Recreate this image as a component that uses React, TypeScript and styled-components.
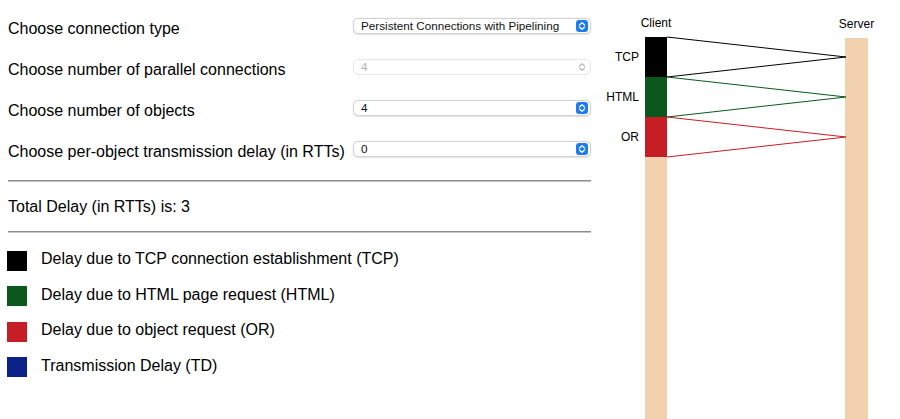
import React from 'react';
import styled, { createGlobalStyle } from 'styled-components';

const GlobalStyle = createGlobalStyle`
  html, body { margin: 0; padding: 0; background: #ffffff; }
  body { font-family: "Liberation Sans", Arial, sans-serif; color: #000; }
  * { box-sizing: border-box; }
`;

const Page = styled.div`
  display: flex;
  width: 900px;
  height: 419px;
  overflow: hidden;
`;

const Controls = styled.div`
  width: 592px;
  flex: none;
  padding: 5px 0 0 8px;
  display: flex;
  flex-direction: column;
`;

const Form = styled.div`
  display: grid;
  grid-template-columns: 345px 238px;
  grid-auto-rows: 41px;
  align-items: center;
`;

const Label = styled.div`
  font-size: 16px;
  line-height: 18px;
  padding-top: 7px;
  white-space: nowrap;
`;

const SelectBox = styled.div<{ $disabled?: boolean }>`
  width: 238px;
  height: 16px;
  border: 1px solid ${(p) => (p.$disabled ? '#e6e6e6' : '#d2d2d2')};
  border-radius: 5px;
  background: #fff;
  box-shadow: ${(p) => (p.$disabled ? 'none' : '0 0.5px 1.5px rgba(0,0,0,0.12)')};
  display: flex;
  align-items: center;
  justify-content: space-between;
  padding: 0 2px 0 7px;
  font-size: 11.7px;
  line-height: 12px;
  color: ${(p) => (p.$disabled ? '#b4b4b4' : '#111')};
`;

const Chevron = styled.span<{ $disabled?: boolean }>`
  width: 12px;
  height: 12px;
  border-radius: 3px;
  background: ${(p) => (p.$disabled ? 'transparent' : '#1f7bf0')};
  display: flex;
  align-items: center;
  justify-content: center;
`;

const Divider = styled.div<{ $top: number }>`
  width: 583px;
  height: 2px;
  margin-top: ${(p) => p.$top}px;
  border-top: 1px solid #8e8e8e;
  border-bottom: 1px solid #c4c4c4;
`;

const Total = styled.div`
  margin-top: 16px;
  font-size: 16px;
  line-height: 18px;
`;

const Legend = styled.div`
  margin-top: 17.7px;
  display: flex;
  flex-direction: column;
  gap: 15.6px;
`;

const LegendRow = styled.div`
  display: flex;
  align-items: flex-start;
  height: 20px;
`;

const Swatch = styled.span<{ $color: string }>`
  width: 20px;
  height: 20px;
  margin-left: -1px;
  background: ${(p) => p.$color};
  flex: none;
`;

const LegendText = styled.span`
  margin-left: 14px;
  margin-top: -0.5px;
  font-size: 16px;
  line-height: 18px;
  white-space: nowrap;
`;

const Diagram = styled.svg`
  width: 308px;
  height: 419px;
  flex: none;
  display: block;
`;

const COLORS = {
  tcp: '#000000',
  html: '#0b581d',
  or: '#c61e24',
  td: '#0a2187',
  peach: '#f1d1ae',
};

function Select({ value, disabled }: { value: string; disabled?: boolean }) {
  const stroke = disabled ? '#b8b8b8' : '#ffffff';
  return (
    <SelectBox $disabled={disabled}>
      <span>{value}</span>
      <Chevron $disabled={disabled}>
        <svg width="8" height="10" viewBox="0 0 8 10">
          <path d="M1.5 4 L4 1.6 L6.5 4" fill="none" stroke={stroke} strokeWidth="1.3" strokeLinecap="round" strokeLinejoin="round" />
          <path d="M1.5 6 L4 8.4 L6.5 6" fill="none" stroke={stroke} strokeWidth="1.3" strokeLinecap="round" strokeLinejoin="round" />
        </svg>
      </Chevron>
    </SelectBox>
  );
}

const rows = [
  { label: 'Choose connection type', value: 'Persistent Connections with Pipelining' },
  { label: 'Choose number of parallel connections', value: '4', disabled: true },
  { label: 'Choose number of objects', value: '4' },
  { label: 'Choose per-object transmission delay (in RTTs)', value: '0' },
];

const legend = [
  { color: COLORS.tcp, text: 'Delay due to TCP connection establishment (TCP)' },
  { color: COLORS.html, text: 'Delay due to HTML page request (HTML)' },
  { color: COLORS.or, text: 'Delay due to object request (OR)' },
  { color: COLORS.td, text: 'Transmission Delay (TD)' },
];

const segments = [
  { label: 'TCP', color: COLORS.tcp, y: 37 },
  { label: 'HTML', color: COLORS.html, y: 77 },
  { label: 'OR', color: COLORS.or, y: 117 },
];

export default function App() {
  return (
    <>
      <GlobalStyle />
      <Page>
        <Controls>
          <Form>
            {rows.map((r) => (
              <React.Fragment key={r.label}>
                <Label>{r.label}</Label>
                <Select value={r.value} disabled={r.disabled} />
              </React.Fragment>
            ))}
          </Form>
          <Divider $top={11} />
          <Total>Total Delay (in RTTs) is: 3</Total>
          <Divider $top={15} />
          <Legend>
            {legend.map((l) => (
              <LegendRow key={l.text}>
                <Swatch $color={l.color} />
                <LegendText>{l.text}</LegendText>
              </LegendRow>
            ))}
          </Legend>
        </Controls>
        <Diagram viewBox="592 0 308 419">
          <text x="656" y="27" fontSize="12" textAnchor="middle" fontFamily="Liberation Sans, Arial, sans-serif">Client</text>
          <text x="856.5" y="27.5" fontSize="12" textAnchor="middle" fontFamily="Liberation Sans, Arial, sans-serif">Server</text>
          <rect x="645" y="37" width="22" height="382" fill={COLORS.peach} />
          <rect x="845" y="38" width="23" height="381" fill={COLORS.peach} />
          {segments.map((s) => (
            <g key={s.label}>
              <rect x="645" y={s.y} width="22" height="40" fill={s.color} />
              <polyline
                points={`667,${s.y} 846,${s.y + 20} 667,${s.y + 40}`}
                fill="none"
                stroke={s.color}
                strokeWidth="1"
              />
              <text x="639" y={s.y + 23.5} fontSize="12" textAnchor="end" fontFamily="Liberation Sans, Arial, sans-serif">
                {s.label}
              </text>
            </g>
          ))}
        </Diagram>
      </Page>
    </>
  );
}
